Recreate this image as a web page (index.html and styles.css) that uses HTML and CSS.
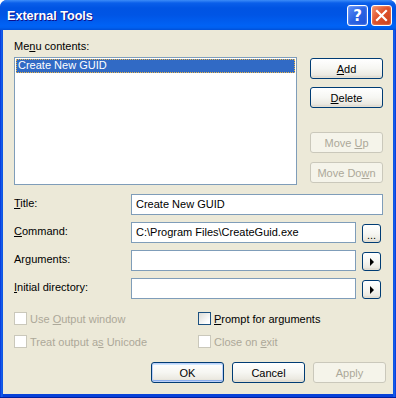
FILE: index.html
```html
<!DOCTYPE html>
<html lang="en">

<head>
    <meta charset="UTF-8">
    <title>External Tools</title>
    <link rel="stylesheet" href="styles.css">
</head>

<body>
    <div class="window">
        <div class="titlebar">
            <span class="title-text">External Tools</span>
            <div class="title-buttons">
                <span class="cap-btn help-btn">?</span>
                <span class="cap-btn close-btn">
                    <svg width="13" height="13" viewBox="0 0 13 13">
                        <path d="M2 2 L11 11 M11 2 L2 11" stroke="#fff" stroke-width="2.2" stroke-linecap="square"/>
                    </svg>
                </span>
            </div>
        </div>

        <div class="client">
            <!-- Menu list and side buttons -->
            <div class="top-section">
                <div class="list-col">
                    <div class="label">Me<u>n</u>u contents:</div>
                    <div class="listbox">
                        <div class="list-item selected">Create New GUID</div>
                    </div>
                </div>
                <div class="side-col">
                    <button class="xp-btn side-add"><u>A</u>dd</button>
                    <button class="xp-btn side-delete"><u>D</u>elete</button>
                    <button class="xp-btn side-up" disabled>Move <u>U</u>p</button>
                    <button class="xp-btn" disabled>Move Do<u>w</u>n</button>
                </div>
            </div>

            <!-- Tool fields -->
            <div class="fields">
                <div class="field-row">
                    <label class="field-label"><u>T</u>itle:</label>
                    <div class="textbox wide">Create New GUID</div>
                </div>
                <div class="field-row">
                    <label class="field-label"><u>C</u>ommand:</label>
                    <div class="textbox">C:\Program Files\CreateGuid.exe</div>
                    <button class="xp-btn small-btn dots">...</button>
                </div>
                <div class="field-row">
                    <label class="field-label">Ar<u>g</u>uments:</label>
                    <div class="textbox"></div>
                    <button class="xp-btn small-btn"><span class="arrow"></span></button>
                </div>
                <div class="field-row">
                    <label class="field-label"><u>I</u>nitial directory:</label>
                    <div class="textbox"></div>
                    <button class="xp-btn small-btn"><span class="arrow"></span></button>
                </div>
            </div>

            <!-- Options -->
            <div class="options">
                <div class="check disabled"><span class="box"></span><span>Use <u>O</u>utput window</span></div>
                <div class="check"><span class="box"></span><span><u>P</u>rompt for arguments</span></div>
                <div class="check disabled"><span class="box"></span><span>Treat output a<u>s</u> Unicode</span></div>
                <div class="check disabled"><span class="box"></span><span>Close on <u>e</u>xit</span></div>
            </div>

            <div class="dialog-footer">
                <button class="xp-btn default-btn">OK</button>
                <button class="xp-btn">Cancel</button>
                <button class="xp-btn" disabled>Apply</button>
            </div>
        </div>
    </div>
</body>

</html>
```

FILE: styles.css
```css
:root {
    --face: #ece9d8;
    --frame: #0842d9;
    --field-border: #7f9db9;
    --btn-border: #003c74;
    --disabled-text: #aca899;
    --disabled-border: #cac8bb;
    --select-bg: #316ac5;
}

* {
    box-sizing: border-box;
}

body {
    margin: 0;
    font-family: "Liberation Sans", Arial, sans-serif;
    font-size: 11px;
    color: #000;
}

u {
    text-decoration: underline;
    text-underline-offset: 1px;
}

.window {
    width: 396px;
    height: 398px;
    display: flex;
    flex-direction: column;
    background: linear-gradient(to right, #0831d9 0, #166aee 2px, #0842d9 3px, #0842d9 393px, #166aee 394px, #0831d9 396px);
    border-radius: 7px 7px 0 0;
    border-bottom: 1px solid #001ea0;
    overflow: hidden;
}

/* Title bar */
.titlebar {
    height: 30px;
    display: flex;
    align-items: center;
    justify-content: space-between;
    padding: 0 4px 0 7px;
    background: linear-gradient(to bottom, #3c8cf8 0, #0a5fea 3px, #0054e3 8px, #0055e5 50%, #0062f5 85%, #0060f0 92%, #0050d8 100%);
}

.title-text {
    color: #fff;
    font-weight: bold;
    font-size: 12.6px;
    text-shadow: 1px 1px 0 #0f1089;
    margin-top: 1px;
}

.title-buttons {
    display: flex;
    gap: 3px;
    margin-top: 1px;
}

.cap-btn {
    width: 21px;
    height: 21px;
    border: 1px solid #fff;
    border-radius: 3px;
    display: flex;
    align-items: center;
    justify-content: center;
    color: #fff;
}

.help-btn {
    background: linear-gradient(135deg, #5d8ef8 0, #2a63e3 50%, #1f52d8 100%);
    font-weight: bold;
    font-size: 15px;
    font-family: "DejaVu Sans", sans-serif;
    box-shadow: inset 0 0 2px #aac4ff;
}

.close-btn {
    background: linear-gradient(135deg, #f2946f 0, #e0532d 45%, #c8401c 100%);
    box-shadow: inset 0 0 2px #ffb49a;
}

/* Client area */
.client {
    flex: 1;
    margin: 0 3px 3px 3px;
    background: var(--face);
    padding: 10px 0 0 11px;
}

.top-section {
    display: flex;
    gap: 13px;
}

.list-col {
    width: 283px;
}

.label {
    line-height: 13px;
    margin-bottom: 4px;
}

.listbox {
    height: 128px;
    border: 1px solid var(--field-border);
    background: #fff;
    padding: 1px;
}

.list-item {
    height: 14px;
    line-height: 12px;
    padding-left: 2px;
}

.list-item.selected {
    background: var(--select-bg);
    color: #fff;
    outline: 1px dotted #e8b64a;
    outline-offset: -1px;
}

.side-col {
    width: 73px;
    padding-top: 18px;
    display: flex;
    flex-direction: column;
    gap: 8px;
}

.side-delete {
    margin-bottom: 16px;
}

.side-up {
    margin-bottom: 1px;
}

/* Buttons */
.xp-btn {
    width: 73px;
    height: 21px;
    padding: 0;
    font-family: inherit;
    font-size: 11px;
    color: #000;
    border: 1px solid var(--btn-border);
    border-radius: 3px;
    background: linear-gradient(to bottom, #fff 0, #f6f6f2 50%, #ebe9e1 85%, #d6d0c5 100%);
    box-shadow: inset 0 -1px 0 #e3dfd3;
}

.xp-btn:disabled {
    color: var(--disabled-text);
    border-color: var(--disabled-border);
    background: #f5f4ea;
    box-shadow: none;
}

.default-btn {
    box-shadow: inset 0 0 0 1px #bccff7, inset 0 -2px 0 #89adec, inset 0 2px 0 #cee7ff;
}

/* Fields */
.fields {
    margin-top: 9px;
    display: flex;
    flex-direction: column;
    gap: 7px;
}

.field-row {
    display: flex;
    align-items: center;
    height: 21px;
}

.field-label {
    width: 117px;
    align-self: flex-start;
    padding-top: 3px;
}

.textbox {
    width: 225px;
    height: 21px;
    border: 1px solid var(--field-border);
    background: #fff;
    padding: 3px 0 0 4px;
    white-space: nowrap;
}

.textbox.wide {
    width: 252px;
}

.small-btn {
    width: 19px;
    height: 19px;
    margin-left: 6px;
    margin-top: 2px;
    display: flex;
    align-items: center;
    justify-content: center;
}

.dots {
    align-items: flex-end;
    padding-bottom: 3px;
    font-size: 11px;
    line-height: 8px;
}

.arrow {
    width: 0;
    height: 0;
    border-top: 4px solid transparent;
    border-bottom: 4px solid transparent;
    border-left: 4px solid #000;
    margin-left: 1px;
}

/* Options */
.options {
    margin-top: 13px;
    display: grid;
    grid-template-columns: 184px 1fr;
    row-gap: 10px;
}

.check {
    display: flex;
    align-items: center;
    height: 13px;
}

.check .box {
    width: 13px;
    height: 13px;
    border: 1px solid #1c5180;
    background: linear-gradient(135deg, #dcdcd7 0, #fff 80%);
    margin-right: 3px;
}

.check.disabled {
    color: var(--disabled-text);
}

.check.disabled .box {
    border-color: var(--disabled-border);
    background: #fff;
}

.dialog-footer {
    margin-top: 14px;
    padding-right: 7px;
    display: flex;
    justify-content: flex-end;
    gap: 8px;
}
```
